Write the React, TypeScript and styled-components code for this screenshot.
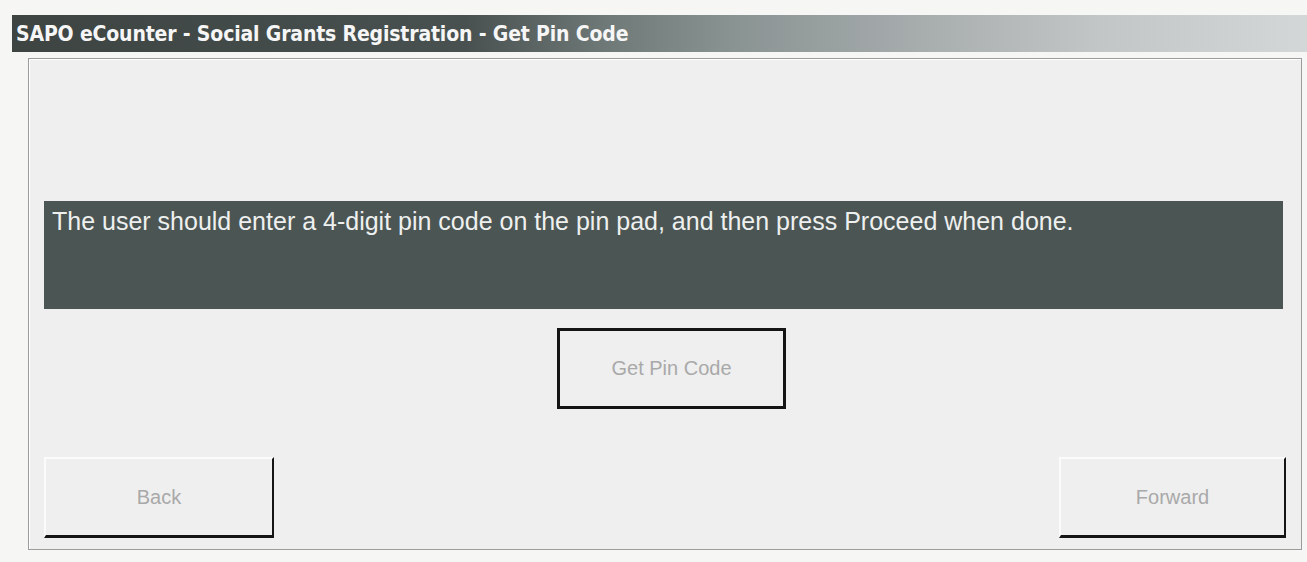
import React from "react";
import styled, { createGlobalStyle } from "styled-components";

const GlobalStyle = createGlobalStyle`
  html, body {
    margin: 0;
    padding: 0;
    background: #f6f6f5;
  }
  * {
    box-sizing: border-box;
  }
`;

const Screen = styled.div`
  display: flex;
  flex-direction: column;
  padding: 15px 0 12px 12px;
  font-family: "Liberation Sans", Arial, sans-serif;
`;

const TitleBar = styled.div`
  height: 37px;
  display: flex;
  align-items: center;
  padding-left: 4px;
  background: linear-gradient(
    to right,
    #3d4442 0%,
    #485150 35%,
    #6f7978 46%,
    #8a9493 56%,
    #a7acad 70%,
    #c2c6c7 84%,
    #d4d7d7 100%
  );
  color: #f6f6f6;
  font-family: "DejaVu Sans Condensed", "Liberation Sans", sans-serif;
  font-weight: 700;
  font-size: 21px;
  letter-spacing: -0.16px;
  white-space: nowrap;
`;

const Panel = styled.div`
  margin: 6px 5px 0 16px;
  border: 1px solid #9c9c9c;
  box-shadow: inset 1px 1px 0 #ffffff;
  background: #efefef;
  padding: 142px 18px 11px 15px;
  display: flex;
  flex-direction: column;
`;

const MessageBar = styled.div`
  height: 108px;
  background: #4b5553;
  color: #eef0ef;
  font-size: 25px;
  line-height: 28px;
  padding: 6px 8px;
  white-space: nowrap;
`;

const CenterRow = styled.div`
  display: flex;
  justify-content: center;
  padding-left: 16px;
  margin-top: 19px;
`;

const ButtonLabel = styled.span`
  font-family: "Liberation Sans", Arial, sans-serif;
  font-size: 20px;
  color: #a9a9a9;
`;

const PinButton = styled.div`
  width: 229px;
  height: 81px;
  display: flex;
  align-items: center;
  justify-content: center;
  border: 3px solid #141414;
  background: #efefef;
`;

const FooterRow = styled.div`
  display: flex;
  justify-content: space-between;
  align-items: flex-end;
  margin-top: 48px;
  margin-right: -3px;
`;

const NavButton = styled.div<{ $width: number }>`
  width: ${(p) => p.$width}px;
  height: 81px;
  display: flex;
  align-items: center;
  justify-content: center;
  background: #efefef;
  border-top: 2px solid #fbfbfb;
  border-left: 2px solid #fbfbfb;
  border-right: 2px solid #151515;
  border-bottom: 3px solid #151515;
`;

export default function App() {
  return (
    <>
      <GlobalStyle />
      <Screen>
        <TitleBar>SAPO eCounter - Social Grants Registration - Get Pin Code</TitleBar>
        <Panel>
          <MessageBar>
            The user should enter a 4-digit pin code on the pin pad, and then press Proceed when done.
          </MessageBar>
          <CenterRow>
            <PinButton>
              <ButtonLabel>Get Pin Code</ButtonLabel>
            </PinButton>
          </CenterRow>
          <FooterRow>
            <NavButton $width={230}>
              <ButtonLabel>Back</ButtonLabel>
            </NavButton>
            <NavButton $width={227}>
              <ButtonLabel>Forward</ButtonLabel>
            </NavButton>
          </FooterRow>
        </Panel>
      </Screen>
    </>
  );
}
